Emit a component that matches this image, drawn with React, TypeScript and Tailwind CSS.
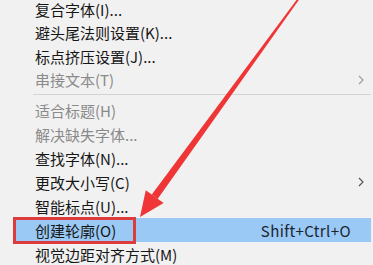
import React from "react";

type Item = {
  label: string;
  disabled?: boolean;
  submenu?: boolean;
  shortcut?: string;
  active?: boolean;
};

const topItems: Item[] = [
  { label: "复合字体(I)..." },
  { label: "避头尾法则设置(K)..." },
  { label: "标点挤压设置(J)..." },
  { label: "串接文本(T)", disabled: true, submenu: true },
];

const bottomItems: Item[] = [
  { label: "适合标题(H)", disabled: true },
  { label: "解决缺失字体...", disabled: true },
  { label: "查找字体(N)..." },
  { label: "更改大小写(C)", submenu: true },
  { label: "智能标点(U)..." },
  { label: "创建轮廓(O)", shortcut: "Shift+Ctrl+O", active: true },
  { label: "视觉边距对齐方式(M)" },
];

function Chevron({ disabled }: { disabled?: boolean }) {
  return (
    <svg width="6" height="10" viewBox="0 0 6 10" className="absolute right-[9px]">
      <polyline
        points="1,1 5,5 1,9"
        fill="none"
        stroke={disabled ? "#9a9a9a" : "#505050"}
        strokeWidth="1.1"
      />
    </svg>
  );
}

function Row({ item, h }: { item: Item; h: string }) {
  return (
    <div
      className={`relative flex items-center ${h} ${
        item.active ? "ml-[13px] mr-[2px] bg-[#99c9f4] pl-[22px]" : "pl-[35px]"
      }`}
    >
      <span className={item.disabled ? "text-[#8a8a8a]" : "text-[#161616]"}>{item.label}</span>
      {item.shortcut && (
        <span className="ml-auto mr-[20px] tracking-[0.4px] text-[#1c2430]">{item.shortcut}</span>
      )}
      {item.submenu && <Chevron disabled={item.disabled} />}
    </div>
  );
}

export default function App() {
  return (
    <div
      className="relative h-[265px] w-[373px] overflow-hidden bg-[#f1f1f1] text-[15px] leading-none"
      style={{ fontFamily: '"Noto Sans CJK SC", "Noto Sans", sans-serif' }}
    >
      <div className="-mt-[2.75px]">
        {topItems.map((it) => (
          <Row key={it.label} item={it} h="h-[23.5px]" />
        ))}
      </div>
      <div className="flex h-[6.75px] items-center pl-[33px] pr-[2px]">
        <div className="h-px w-full bg-[#d4d4d4]" />
      </div>
      <div>
        {bottomItems.map((it) => (
          <Row key={it.label} item={it} h="h-[24px]" />
        ))}
      </div>

      {/* red highlight box */}
      <div className="pointer-events-none absolute left-[13px] top-[217px] h-[27px] w-[123px] border-[3px] border-[#dc3c3c]" />

      {/* red arrow */}
      <svg className="pointer-events-none absolute inset-0" width="373" height="265" viewBox="0 0 373 265">
        <polygon
          points="298,-2 299.5,-1 157.6,198.9 151.8,194.6"
          fill="#ef3535"
        />
        <polygon points="140,217 145.8,190.3 163.6,203.1" fill="#ef3535" />
      </svg>
    </div>
  );
}
